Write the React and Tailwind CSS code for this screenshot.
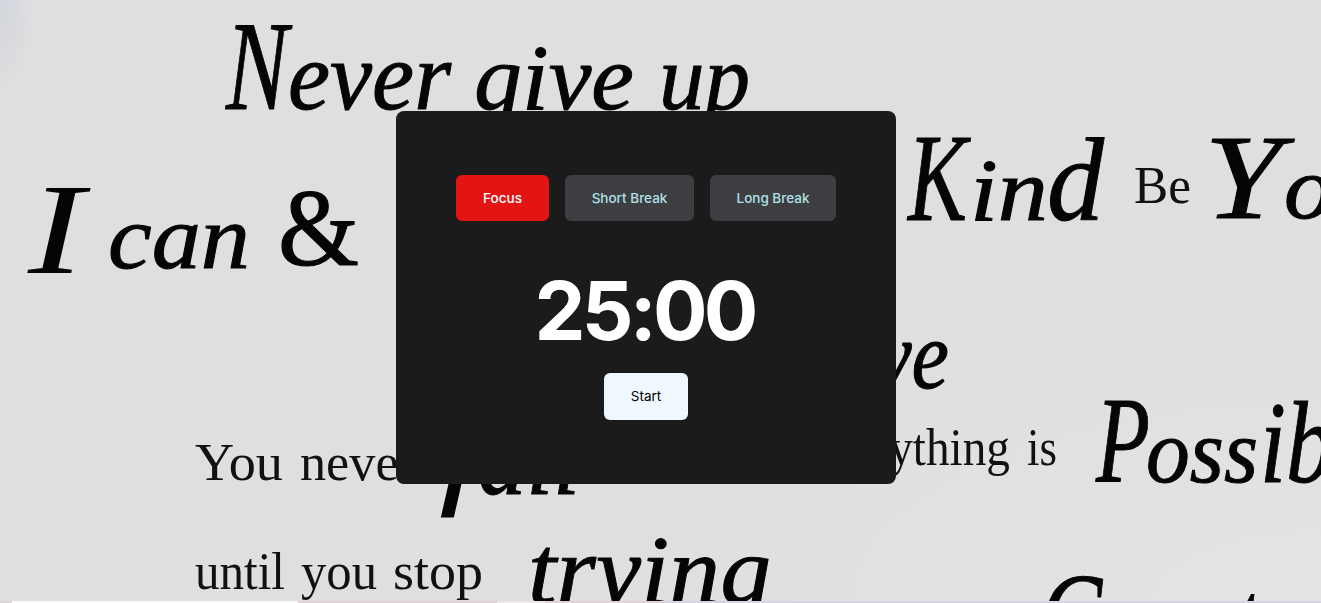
const script = 'font-["Liberation_Serif",serif] italic font-normal';
const serif = 'font-["Liberation_Serif",serif] font-normal';

// Each word is a baseline plus runs of [letters, x, width, size].
const scriptWords = [
  { y: 109, runs: [['N', 226, 62, 126], ['ever', 288, 163, 98]] },
  { y: 109, runs: [['give', 474, 160, 94]] },
  { y: 109, runs: [['up', 659, 91, 94]] },
  { y: 273, runs: [['I', 28, 56, 130]], thin: true },
  { y: 268, runs: [['can', 108, 142, 90]] },
  { y: 220, runs: [['K', 908, 59, 124], ['in', 970, 78, 88], ['d', 1047, 57, 118]] },
  { y: 218, runs: [['Y', 1204, 78, 120], ['ourself', 1284, 270, 88]] },
  { y: 388, runs: [['Believe', 701, 248, 98]] },
  { y: 482, runs: [['P', 1096, 54, 122], ['oss', 1146, 112, 92], ['ible', 1260, 140, 116]] },
  { y: 494, runs: [['f', 440, 40, 110], ['ail', 478, 102, 104]] },
  { y: 603, runs: [['trying', 528, 243, 98]] },
  { y: 658, runs: [['C', 1040, 62, 122], ['reate', 1118, 182, 112]] },
];

const serifWords = [
  { t: 'Be', x: 1134, y: 203, w: 57 },
  { t: 'Everything', x: 800, y: 465, w: 210 },
  { t: 'is', x: 1027, y: 465, w: 30 },
  { t: 'You', x: 195, y: 480, w: 88 },
  { t: 'never', x: 300, y: 480, w: 116 },
  { t: 'until', x: 195, y: 589, w: 90 },
  { t: 'you', x: 301, y: 589, w: 76 },
  { t: 'stop', x: 393, y: 589, w: 90 },
];

function Wallpaper() {
  return (
    <svg className="absolute inset-0" width="1321" height="601" viewBox="0 0 1321 601" aria-hidden="true">
      {scriptWords.map((word) => (
        <text key={word.runs[0][1]} y={word.y} fill="#050505" stroke="#050505" strokeWidth={word.thin ? 0 : 1} className={script}>
          {word.runs.map(([letters, x, width, size]) => (
            <tspan key={letters} x={x} fontSize={size} textLength={width} lengthAdjust="spacingAndGlyphs">
              {letters}
            </tspan>
          ))}
        </text>
      ))}
      <text x="278" y="265" fontSize="110" textLength="81" lengthAdjust="spacingAndGlyphs" fill="#050505" stroke="#050505" strokeWidth="1.2" className={serif}>&amp;</text>
      {serifWords.map((word) => (
        <text key={word.t} x={word.x} y={word.y} fontSize="53" textLength={word.w} lengthAdjust="spacingAndGlyphs" fill="#111111" className={serif}>
          {word.t}
        </text>
      ))}
    </svg>
  );
}

const modes = [
  { label: 'Focus', box: 'w-[93px] bg-[#e41414] text-white' },
  { label: 'Short Break', box: 'w-[129px] bg-[#3d3e42] text-[#b0e0e6]' },
  { label: 'Long Break', box: 'w-[126px] bg-[#3d3e42] text-[#b0e0e6]' },
];

export default function App() {
  return (
    <div className='relative h-[603px] w-[1321px] overflow-hidden bg-[#dfdfdf] bg-[radial-gradient(ellipse_35px_95px_at_0_0,#d2d5dd,transparent),radial-gradient(ellipse_700px_300px_at_100%_100%,#e4e4e4,transparent)] font-["Inter",sans-serif]'>
      <Wallpaper />
      <div className="absolute inset-x-0 bottom-0 flex h-[2px] bg-[#dcd4d7]">
        <span className="ml-3 w-[286px] bg-[#fafafa]" />
        <span className="ml-[199px] w-[48px] bg-[#eee7ea]" />
        <span className="ml-[120px] flex-1 bg-[#d7d5df]" />
      </div>
      <main className="relative ml-[396px] mt-[111.4px] flex h-[373px] w-[500px] flex-col items-center rounded-lg bg-[#1b1b1b] pt-16">
        <div className="flex gap-4">
          {modes.map((m) => (
            <button key={m.label} className={`flex h-[46px] items-center justify-center rounded-md pb-px text-[13.5px] font-medium ${m.box}`}>
              {m.label}
            </button>
          ))}
        </div>
        <div className="mt-[42px] h-[96px] whitespace-nowrap pr-[3px] text-[81px] font-bold leading-[96px] tracking-[-3.8px] text-white">25:00</div>
        <button className="mt-[14px] flex h-[47px] w-[84px] items-center justify-center rounded-md bg-[#f0f8ff] pb-0.5 text-[13.5px] text-black">Start</button>
      </main>
    </div>
  );
}
